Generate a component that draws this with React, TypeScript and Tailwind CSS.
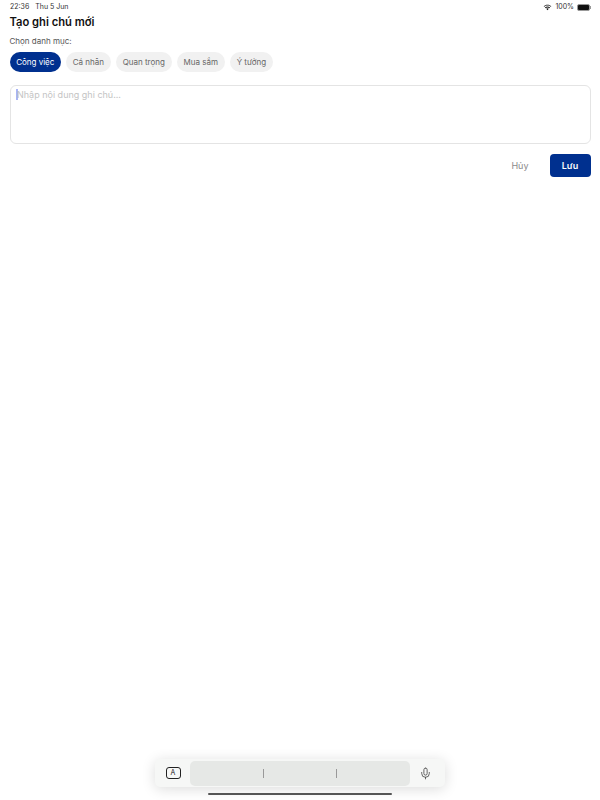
import React from 'react';
import { Mic } from 'lucide-react';

const categories = ['Cá nhân', 'Quan trọng', 'Mua sắm', 'Ý tưởng'];

const WifiIcon = () => (
  <svg width="9" height="7" viewBox="0 0 18 13" fill="#111">
    <path d="M9 2.6c2.5 0 4.8 1 6.5 2.6l1.2-1.3C14.700 2 12 .8 9 .8S3.300 2 1.300 3.900l1.200 1.300C4.200 3.600 6.500 2.600 9 2.600z" />
    <path d="M9 6.300c1.500 0 2.800.6 3.900 1.500l1.200-1.300C12.700 5.200 11 4.500 9 4.500s-3.700.7-5.100 2l1.200 1.300C6.200 6.900 7.500 6.300 9 6.300z" />
    <path d="M9 8.200c-1 0-1.900.4-2.600 1L9 12l2.600-2.800c-.7-.6-1.600-1-2.600-1z" />
  </svg>
);

const BatteryIcon = () => (
  <div className="flex items-center">
    <div className="w-[13px] h-[7px] rounded-[2px] bg-[#111] border border-[#999]" />
    <div className="w-[1px] h-[3px] bg-[#999]" />
  </div>
);

export default function App() {
  return (
    <div className="relative h-[800px] w-[600px] overflow-hidden bg-white font-['Inter',sans-serif] flex flex-col">
      <div className="flex items-center justify-between h-[14px] pl-[10px] pr-[9px] pt-[1px] text-[7px] text-[#333]">
        <div className="flex gap-[6px]">
          <span>22:36</span>
          <span>Thu 5 Jun</span>
        </div>
        <div className="flex items-center gap-[3px]">
          <WifiIcon />
          <span>100%</span>
          <BatteryIcon />
        </div>
      </div>

      <div className="pl-[9.500px] pr-[9.500px] flex-1">
        <h1 className="mt-[1px] text-[11.200px] leading-[15px] font-semibold text-[#111]">Tạo ghi chú mới</h1>

        <p className="mt-[5px] text-[8px] leading-[12px] text-[#555]">Chọn danh mục:</p>

        <div className="mt-[5px] flex gap-[4.700px]">
          <button className="h-[20px] w-[51.500px] rounded-full bg-[#00308f] text-white text-[8px] flex items-center justify-center">
            Công việc
          </button>
          {categories.map((c) => (
            <button
              key={c}
              className="h-[20px] px-[7px] rounded-full bg-[#f1f1f1] text-[#666] text-[8px] flex items-center justify-center"
            >
              {c}
            </button>
          ))}
        </div>

        <div className="mt-[13px] h-[59px] rounded-[6px] border border-[#e4e4e4] pl-[5.500px] pt-[3px] flex items-start">
          <div className="w-[2px] h-[11px] bg-[#a9b4f5] mr-[-1px]" />
          <span className="text-[9px] leading-[11px] text-[#c4c4c4]">Nhập nội dung ghi chú...</span>
        </div>

        <div className="mt-[10px] flex items-center justify-end">
          <button className="text-[9px] text-[#8a8a8a] mr-[21px]">Hủy</button>
          <button className="h-[23px] w-[41px] rounded-[4px] bg-[#00308f] text-white text-[9px] font-semibold">Lưu</button>
        </div>
      </div>

      <div className="flex justify-center">
        <div className="w-[290px] h-[28px] rounded-[5px] bg-[#f6f7f6] shadow-[0_2px_14px_rgba(0,0,0,0.14)] flex items-center">
          <div className="w-[35px] pl-[1px] flex justify-center">
            <div className="w-[15px] h-[12px] rounded-[3px] border border-[#222] text-[7px] leading-[10px] text-center text-[#222]">A</div>
          </div>
          <div className="w-[220px] h-[25px] rounded-[5px] bg-[#e6e8e6] flex items-center justify-evenly">
            <div className="w-[1px] h-[9px] bg-[#999]" />
            <div className="w-[1px] h-[9px] bg-[#999]" />
          </div>
          <div className="w-[35px] pr-[4px] flex justify-center">
            <Mic size={13} strokeWidth={1.5} className="text-[#444]" />
          </div>
        </div>
      </div>

      <div className="flex justify-center mt-[6px] mb-[5px]">
        <div className="w-[184px] h-[2px] rounded-full bg-[#555]" />
      </div>
    </div>
  );
}
